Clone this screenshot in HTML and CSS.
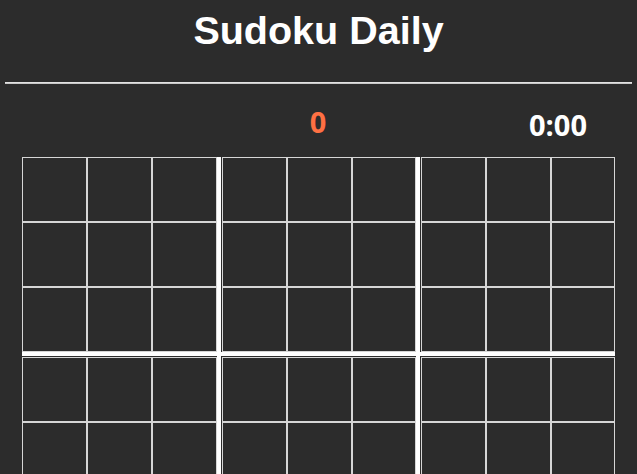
FILE: index.html
```html
<!DOCTYPE html>
<html lang="en">
<head>
<meta charset="utf-8">
<title>Sudoku Daily</title>
<link rel="stylesheet" href="styles.css">
</head>
<body>
<h1 class="title">Sudoku Daily</h1>
<hr class="rule">
<div class="stats">
  <span class="spacer"></span>
  <span class="score">0</span>
  <span class="timer">0:00</span>
</div>
<div class="board" id="board">
  <div class="vsep vsep-a"></div>
  <div class="vsep vsep-b"></div>
  <div class="hsep hsep-a"></div>
  <div class="hsep hsep-b"></div>
  <div class="cell"></div><div class="cell"></div><div class="cell"></div><div class="cell"></div><div class="cell"></div><div class="cell"></div><div class="cell"></div><div class="cell"></div><div class="cell"></div>
  <div class="cell"></div><div class="cell"></div><div class="cell"></div><div class="cell"></div><div class="cell"></div><div class="cell"></div><div class="cell"></div><div class="cell"></div><div class="cell"></div>
  <div class="cell"></div><div class="cell"></div><div class="cell"></div><div class="cell"></div><div class="cell"></div><div class="cell"></div><div class="cell"></div><div class="cell"></div><div class="cell"></div>
  <div class="cell"></div><div class="cell"></div><div class="cell"></div><div class="cell"></div><div class="cell"></div><div class="cell"></div><div class="cell"></div><div class="cell"></div><div class="cell"></div>
  <div class="cell"></div><div class="cell"></div><div class="cell"></div><div class="cell"></div><div class="cell"></div><div class="cell"></div><div class="cell"></div><div class="cell"></div><div class="cell"></div>
  <div class="cell"></div><div class="cell"></div><div class="cell"></div><div class="cell"></div><div class="cell"></div><div class="cell"></div><div class="cell"></div><div class="cell"></div><div class="cell"></div>
  <div class="cell"></div><div class="cell"></div><div class="cell"></div><div class="cell"></div><div class="cell"></div><div class="cell"></div><div class="cell"></div><div class="cell"></div><div class="cell"></div>
  <div class="cell"></div><div class="cell"></div><div class="cell"></div><div class="cell"></div><div class="cell"></div><div class="cell"></div><div class="cell"></div><div class="cell"></div><div class="cell"></div>
  <div class="cell"></div><div class="cell"></div><div class="cell"></div><div class="cell"></div><div class="cell"></div><div class="cell"></div><div class="cell"></div><div class="cell"></div><div class="cell"></div>
</div>
</body>
</html>
```
FILE: styles.css
```css
html, body {
  margin: 0;
  padding: 0;
  background: #2c2c2c;
  overflow: hidden;
}

body {
  font-family: "Liberation Sans", Arial, sans-serif;
  color: #ffffff;
}

.title {
  margin: 0;
  padding-top: 8px;
  font-size: 39.5px;
  line-height: 45px;
  font-weight: 700;
  text-align: center;
  color: #ffffff;
}

.rule {
  margin: 29px 5px 0;
  height: 0;
  border: none;
  border-top: 1px solid #e2e2e2;
  border-bottom: 1px solid #c8c8c8;
}

.stats {
  width: 592px;
  margin-left: 22px;
  padding-top: 23px;
  display: grid;
  grid-template-columns: 1fr auto 1fr;
  align-items: start;
  font-family: "Open Sans", "Liberation Sans", sans-serif;
  font-weight: 700;
  font-size: 29px;
  line-height: 29px;
}

.score {
  color: #ff7043;
}

.timer {
  justify-self: end;
  margin-right: 27px;
  padding-top: 3px;
  color: #ffffff;
}

.board {
  margin: 18px 0 0 22px;
  display: grid;
  grid-template-columns: 65px 65px 65px 5px 65px 65px 64px 5px 65px 65px 64px;
  grid-template-rows: 65px 65px 65px 5px 65px 65px 65px 5px 65px 65px 65px;
  gap: 0;
  width: max-content;
}

.cell {
  box-sizing: border-box;
  border: 1px solid #d6d6d6;
}

.vsep {
  background: #ffffff;
  grid-row: 1 / -1;
  margin-right: 1px;
}
.vsep-a { grid-column: 4; }
.vsep-b { grid-column: 8; }

.hsep {
  background: #ffffff;
  grid-column: 1 / -1;
  margin-bottom: 1px;
}
.hsep-a { grid-row: 4; }
.hsep-b { grid-row: 8; }
```
